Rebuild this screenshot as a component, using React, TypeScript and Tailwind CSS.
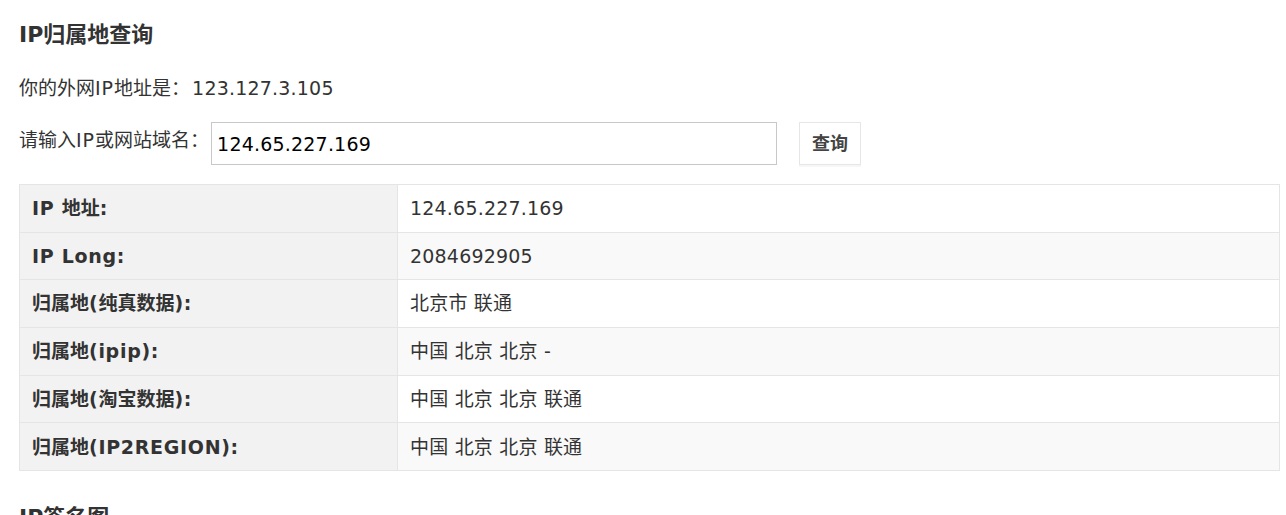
import { useState } from "react"

const rows = [
  { label: "IP 地址:", value: "124.65.227.169" },
  { label: "IP Long:", value: "2084692905" },
  { label: "归属地(纯真数据):", value: "北京市 联通" },
  { label: "归属地(ipip):", value: "中国 北京 北京 -" },
  { label: "归属地(淘宝数据):", value: "中国 北京 北京 联通" },
  { label: "归属地(IP2REGION):", value: "中国 北京 北京 联通" },
]

// 拉丁字符稍微加宽，接近原页面的字体
function Label({ text }: { text: string }) {
  return (
    <>
      {text.split(/([\u4e00-\u9fff]+)/).map((part, i) =>
        /[\u4e00-\u9fff]/.test(part) ? (
          <span key={i}>{part}</span>
        ) : (
          <span key={i} className="tracking-[0.7px]">
            {part}
          </span>
        )
      )}
    </>
  )
}

export default function App() {
  const [query, setQuery] = useState("124.65.227.169")

  return (
    <div className="min-h-screen bg-white pl-[19px] text-[19px] text-[#333] font-['DejaVu_Sans','Noto_Sans_CJK_SC',sans-serif]">
      {/* 标题 */}
      <h2 className="pt-[20px] text-[22px] font-bold leading-[30px]">IP归属地查询</h2>

      <p className="mt-[24px] leading-[28px]">
        你的外网<span className="tracking-[1px]">IP</span>地址是：
        <span className="ml-[2px] tracking-[0.2px]">123.127.3.105</span>
      </p>

      {/* 查询表单 */}
      <div className="mt-[20px] flex items-start">
        <label className="mt-[4px] leading-[28px]">
          请输入<span className="tracking-[1px]">IP</span>或网站域名：
        </label>
        <input
          value={query}
          onChange={(e) => setQuery(e.target.value)}
          className="ml-[2px] h-[43px] w-[566px] border border-[#c8c8c8] px-[5px] tracking-[0.2px] text-black outline-none"
        />
        <button className="ml-[22px] h-[43px] w-[62px] border border-[#e6e6e6] bg-white text-[18px] font-bold text-[#444] shadow-[0_2px_0_#f6f6f6]">
          查询
        </button>
      </div>

      {/* 结果表格 */}
      <table className="mt-[19px] w-[1261px] border-collapse">
        <tbody>
          {rows.map((row, i) => (
            <tr key={i} className={i % 2 === 1 ? "bg-[#f9f9f9]" : "bg-white"}>
              <td className="h-[47.7px] w-[378px] border border-[#e5e5e5] bg-[#f2f2f2] px-[12px] font-bold">
                <Label text={row.label} />
              </td>
              <td className="h-[47.7px] border border-[#e5e5e5] px-[12px] tracking-[0.2px]">{row.value}</td>
            </tr>
          ))}
        </tbody>
      </table>

      <h2 className="mt-[32px] text-[22px] font-bold leading-[30px]">IP签名图</h2>
    </div>
  )
}
